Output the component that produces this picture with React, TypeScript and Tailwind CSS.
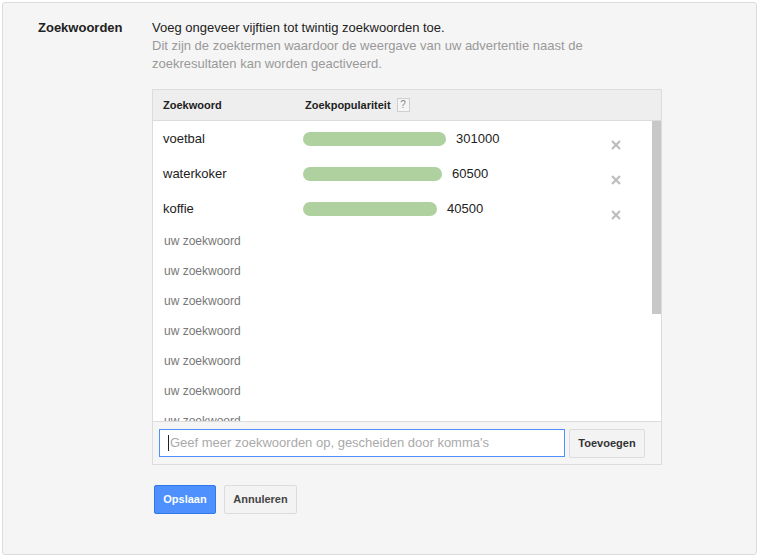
import React from 'react';

const keywords = [
  { word: 'voetbal', volume: 301000, bar: 143 },
  { word: 'waterkoker', volume: 60500, bar: 139 },
  { word: 'koffie', volume: 40500, bar: 134 },
];

const placeholders = 7;

export default function App() {
  return (
    <div className="w-[761px] h-[557px] bg-white pt-[2px] pl-[2px] font-['Liberation_Sans',Arial,sans-serif]">
      <div className="w-[755px] h-[553px] border border-[#dcdcdc] rounded-[3px] bg-[#f5f5f5] flex">
        {/* label column */}
        <div className="w-[149px] pl-[35px] pt-[16px]">
          <h2 className="text-[13px] leading-[18px] font-bold text-[#222]">Zoekwoorden</h2>
        </div>

        {/* content */}
        <div className="pt-[16px]">
          <p className="text-[13px] leading-[18px] text-[#222]">Voeg ongeveer vijftien tot twintig zoekwoorden toe.</p>
          <p className="text-[13px] leading-[18px] text-[#999] w-[450px]">
            Dit zijn de zoektermen waardoor de weergave van uw advertentie naast de zoekresultaten kan worden geactiveerd.
          </p>

          <div className="mt-[16px] w-[510px] border border-[#dcdcdc] bg-white">
            {/* header */}
            <div className="h-[31px] bg-[#eeeeee] border-b border-[#dcdcdc] flex items-center text-[11px] font-bold text-[#222]">
              <span className="pl-[10px] w-[152px]">Zoekwoord</span>
              <span>Zoekpopulariteit</span>
              <span className="ml-[6px] w-[13px] h-[14px] border border-[#cfcfcf] bg-[#f5f5f5] text-[10px] font-normal text-[#888] flex items-center justify-center leading-none">?</span>
            </div>

            {/* list */}
            <div className="relative h-[300px] overflow-hidden">
              <div className="absolute right-0 top-0 w-[9px] h-[193px] bg-[#c8c8c8]"></div>
              {keywords.map((k) => (
                <div key={k.word} className="h-[35px] flex items-center text-[13px] text-[#222]">
                  <span className="pl-[10px] w-[150px]">{k.word}</span>
                  <div className="h-[14px] rounded-full bg-[#aed19f]" style={{ width: k.bar }}></div>
                  <span className="ml-[10px]">{k.volume}</span>
                  <svg className="absolute left-[458px] mt-[12px]" width="10" height="10" viewBox="0 0 10 10">
                    <path d="M1 1 L9 9 M9 1 L1 9" stroke="#bbbbbb" strokeWidth="2" />
                  </svg>
                </div>
              ))}
              {Array.from({ length: placeholders }).map((_, i) => (
                <div key={i} className="h-[30px] flex items-center pl-[11px] text-[12px] text-[#777]">
                  uw zoekwoord
                </div>
              ))}
            </div>

            {/* add bar */}
            <div className="h-[43px] border-t border-[#dcdcdc] bg-[#f5f5f5] flex items-center pl-[6px]">
              <div className="w-[406px] h-[28px] border border-[#4d90fe] bg-white flex items-center pl-[9px] text-[13px] text-[#aaa]">
                <span className="w-px h-[16px] bg-[#222] -ml-[1px] mr-[1px]"></span>
                Geef meer zoekwoorden op, gescheiden door komma's
              </div>
              <button className="ml-[4px] w-[76px] h-[29px] border border-[#dcdcdc] rounded-[2px] bg-[#f3f3f3] text-[11px] font-bold text-[#333]">
                Toevoegen
              </button>
            </div>
          </div>

          <div className="mt-[20px] ml-[2px] flex gap-[8px]">
            <button className="w-[62px] h-[29px] rounded-[2px] border border-[#3079ed] bg-[#4d90fe] text-[11px] font-bold text-white">
              Opslaan
            </button>
            <button className="w-[73px] h-[29px] rounded-[2px] border border-[#dcdcdc] bg-[#f3f3f3] text-[11px] font-bold text-[#444]">
              Annuleren
            </button>
          </div>
        </div>
      </div>
    </div>
  );
}
